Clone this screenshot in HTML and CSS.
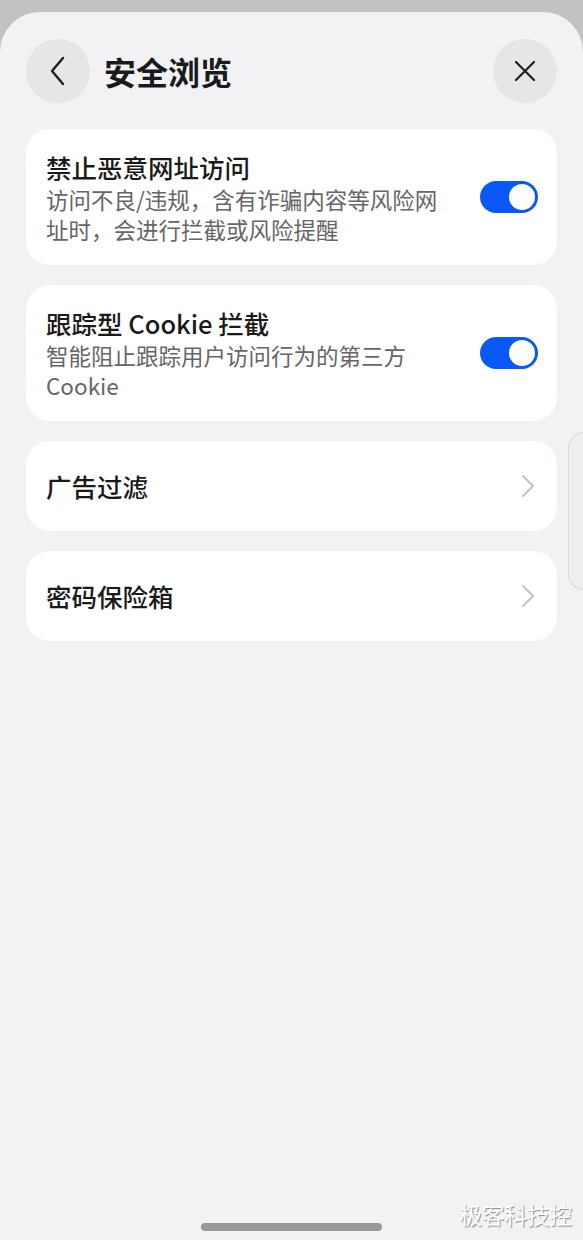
FILE: index.html
```html
<!DOCTYPE html>
<html lang="zh-CN">
<head>
    <meta charset="UTF-8">
    <meta name="viewport" content="width=device-width, initial-scale=1.0">
    <title>安全浏览</title>
    <link rel="stylesheet" href="styles.css">
</head>
<body>
    <div class="sheet">
        <!-- Header -->
        <header class="top-bar">
            <button class="round-btn" aria-label="返回">
                <svg width="20" height="30" viewBox="0 0 20 30"><path d="M15 2 L4 15 L15 28" fill="none" stroke="#1f1f1f" stroke-width="2.4" stroke-linecap="round" stroke-linejoin="round"/></svg>
            </button>
            <h1 class="page-title">安全浏览</h1>
            <button class="round-btn close-btn" aria-label="关闭">
                <svg width="22" height="22" viewBox="0 0 22 22"><path d="M2 2 L20 20 M20 2 L2 20" fill="none" stroke="#1f1f1f" stroke-width="2.2" stroke-linecap="round"/></svg>
            </button>
        </header>

        <!-- Settings list -->
        <main class="settings">
            <div class="card card-switch">
                <div class="card-text">
                    <div class="card-title">禁止恶意网址访问</div>
                    <div class="card-desc">访问不良/违规，含有诈骗内容等风险网址时，会进行拦截或风险提醒</div>
                </div>
                <span class="switch"><span class="knob"></span></span>
            </div>

            <div class="card card-switch">
                <div class="card-text">
                    <div class="card-title">跟踪型 Cookie 拦截</div>
                    <div class="card-desc">智能阻止跟踪用户访问行为的第三方 Cookie</div>
                </div>
                <span class="switch"><span class="knob"></span></span>
            </div>

            <a class="card card-link" href="#">
                <span class="card-title">广告过滤</span>
                <svg width="14" height="24" viewBox="0 0 14 24"><path d="M2 2 L12 12 L2 22" fill="none" stroke="#c2c2c4" stroke-width="2" stroke-linecap="round" stroke-linejoin="round"/></svg>
            </a>

            <a class="card card-link" href="#">
                <span class="card-title">密码保险箱</span>
                <svg width="14" height="24" viewBox="0 0 14 24"><path d="M2 2 L12 12 L2 22" fill="none" stroke="#c2c2c4" stroke-width="2" stroke-linecap="round" stroke-linejoin="round"/></svg>
            </a>
        </main>

        <div class="side-handle"></div>
        <div class="home-bar"></div>
        <div class="watermark">极客科技控</div>
    </div>
</body>
</html>
```

FILE: styles.css
```css
html, body {
    margin: 0;
    padding: 0;
}
body {
    background-color: #c1c2c4;
    font-family: "Noto Sans CJK SC", "Noto Sans", sans-serif;
    color: #1a1a1a;
}
.sheet {
    position: relative;
    margin-top: 12px;
    height: 1228px;
    box-sizing: border-box;
    padding: 27px 26px 0;
    background-color: #f1f2f4;
    border-radius: 40px 40px 0 0;
    overflow: hidden;
}
.top-bar {
    display: flex;
    align-items: center;
    height: 64px;
}
.round-btn {
    width: 64px;
    height: 64px;
    border: none;
    border-radius: 50%;
    background-color: #e5e6e8;
    display: flex;
    align-items: center;
    justify-content: center;
    padding: 0;
    cursor: pointer;
}
.close-btn {
    margin-left: auto;
}
.page-title {
    margin: 0 0 0 14px;
    font-size: 32px;
    font-weight: 700;
    line-height: 40px;
    color: #1a1a1a;
}
.settings {
    margin-top: 26px;
    display: flex;
    flex-direction: column;
    gap: 20px;
}
.card {
    background-color: #fff;
    border-radius: 24px;
    display: flex;
    align-items: center;
    box-sizing: border-box;
}
.card-switch {
    padding: 21px 19px 21px 20px;
    gap: 30px;
}
.card-text {
    flex: 1;
}
.card-title {
    font-size: 25.5px;
    font-weight: 500;
    line-height: 34px;
    color: #1a1a1a;
}
.card-desc {
    font-size: 22.5px;
    line-height: 30px;
    color: #666;
}
.switch {
    position: relative;
    flex: none;
    width: 58px;
    height: 32px;
    border-radius: 16px;
    background-color: #0a59f7;
}
.knob {
    position: absolute;
    top: 3px;
    right: 3px;
    width: 26px;
    height: 26px;
    border-radius: 50%;
    background-color: #fff;
}
.card-link {
    height: 90px;
    padding: 0 22px 0 20px;
    justify-content: space-between;
    text-decoration: none;
}
.side-handle {
    position: absolute;
    right: -1px;
    top: 420px;
    width: 16px;
    height: 158px;
    box-sizing: border-box;
    border: 1px solid #d9dadc;
    border-radius: 16px 0 0 16px;
    background-color: #eceef0;
}
.home-bar {
    position: absolute;
    left: 201px;
    top: 1211px;
    width: 181px;
    height: 8px;
    border-radius: 4px;
    background-color: #9a9a9a;
}
.watermark {
    position: absolute;
    right: 11px;
    top: 1187px;
    font-size: 22.5px;
    line-height: 30px;
    color: #fff;
    text-shadow: 1px 1px 1px #8a8a8a;
}
```
